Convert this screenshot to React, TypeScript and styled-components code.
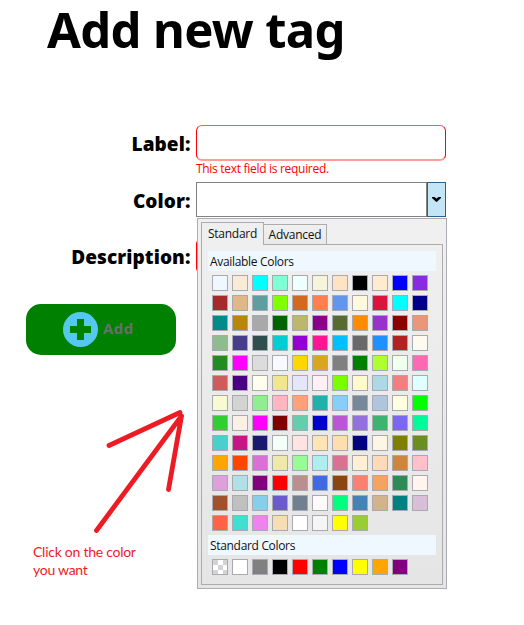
import React from "react";
import styled, { createGlobalStyle } from "styled-components";

const GlobalStyle = createGlobalStyle`
  * { box-sizing: border-box; }
  body { margin: 0; background: #fff; }
`;

const AVAILABLE_COLORS = `aliceblue antiquewhite aqua aquamarine azure beige bisque black blanchedalmond blue blueviolet
brown burlywood cadetblue chartreuse chocolate coral cornflowerblue cornsilk crimson cyan darkblue
darkcyan darkgoldenrod darkgray darkgreen darkkhaki darkmagenta darkolivegreen darkorange darkorchid darkred darksalmon
darkseagreen darkslateblue darkslategray darkturquoise darkviolet deeppink deepskyblue dimgray dodgerblue firebrick floralwhite
forestgreen fuchsia gainsboro ghostwhite gold goldenrod gray green greenyellow honeydew hotpink
indianred indigo ivory khaki lavender lavenderblush lawngreen lemonchiffon lightblue lightcoral lightcyan
lightgoldenrodyellow lightgray lightgreen lightpink lightsalmon lightseagreen lightskyblue lightslategray lightsteelblue lightyellow lime
limegreen linen magenta maroon mediumaquamarine mediumblue mediumorchid mediumpurple mediumseagreen mediumslateblue mediumspringgreen
mediumturquoise mediumvioletred midnightblue mintcream mistyrose moccasin navajowhite navy oldlace olive olivedrab
orange orangered orchid palegoldenrod palegreen paleturquoise palevioletred papayawhip peachpuff peru pink
plum powderblue purple red rosybrown royalblue saddlebrown salmon sandybrown seagreen seashell
sienna silver skyblue slateblue slategray snow springgreen steelblue tan teal thistle
tomato turquoise violet wheat white whitesmoke yellow yellowgreen`.split(/\s+/);

const STANDARD_COLORS = [
  "conic-gradient(#fff 25%, #d3d3d3 0 50%, #fff 0 75%, #d3d3d3 0) 0 0 / 10px 10px",
  "white", "gray", "black", "red", "green", "blue", "yellow", "orange", "purple",
];

const Page = styled.main`
  position: relative;
  width: 524px;
  height: 625px;
  background: #fff;
  color: #000;
  font-family: "Open Sans", "Noto Sans", sans-serif;
`;

const Title = styled.h1`
  margin: 0 0 0 47px;
  height: 125px;
  font: 700 49px/58px "Noto Sans", sans-serif;
  letter-spacing: -0.65px;
  white-space: nowrap;
`;

const Form = styled.form`
  display: grid;
  grid-template-columns: 190.5px 250px;
  grid-template-rows: 57px 56px 66px;
  column-gap: 5.5px;
`;

const FieldLabel = styled.label`
  justify-self: end;
  font: 800 19px/39px "Open Sans", sans-serif;
  letter-spacing: 0.08px;
  white-space: nowrap;
`;

const Field = styled.div``;

const TextInput = styled.input`
  display: block;
  width: 250px;
  height: 36px;
  padding: 0 8px;
  border: 1px solid #f00;
  border-top-color: #ff5a5a;
  border-bottom: 2px solid #ff9c9c;
  border-radius: 6px;
  background: #fff;
  outline: none;
`;

const ErrorText = styled.div`
  color: #f00;
  font: 400 12px/16px "Open Sans", sans-serif;
  letter-spacing: -0.3px;
  white-space: nowrap;
`;

const Combo = styled.div`
  display: flex;
  width: 250px;
  height: 35px;
`;

const ComboValue = styled.div`
  flex: 1;
  border: 1px solid #828282;
  background: #fff;
`;

const ComboButton = styled.button`
  display: flex;
  align-items: center;
  justify-content: center;
  width: 19px;
  padding: 0;
  border: 1px solid #2c628b;
  background: #c4e5f6;
`;

const AddButton = styled.button`
  display: flex;
  align-items: center;
  gap: 5px;
  width: 150px;
  height: 51px;
  margin-left: 26px;
  padding: 0 0 0 37px;
  border: 0;
  border-radius: 15px;
  background: #008000;
  color: #6d6d6d;
  font: 700 15px/20px "Open Sans", sans-serif;
  letter-spacing: 0.4px;
`;

const AddText = styled.span`
  padding-bottom: 4px;
`;

const Arrow = styled.svg`
  display: block;
  margin: 54px 0 0 90px;
`;

const Note = styled.p`
  margin: 8px 0 0 33px;
  width: 130px;
  color: #ed1c24;
  font: 400 14px/18px Lato, sans-serif;
  letter-spacing: -0.26px;
`;

const Popup = styled.section`
  position: absolute;
  left: 197px;
  top: 218px;
  width: 250px;
  height: 371px;
  padding: 3px;
  border: 1px solid #acacb4;
  background: linear-gradient(#f0f0f0, #e5e5e5);
`;

const Tabs = styled.div`
  display: flex;
  align-items: flex-end;
  height: 22px;
`;

const Tab = styled.button<{ $active?: boolean }>`
  position: relative;
  z-index: ${(p) => (p.$active ? 1 : 0)};
  width: ${(p) => (p.$active ? 63 : 64)}px;
  height: ${(p) => (p.$active ? 23 : 20)}px;
  margin: ${(p) => (p.$active ? "0 0 -1px" : "0 0 0 -1px")};
  padding: ${(p) => (p.$active ? "0 0 1px" : "1px 0 0")};
  border: 1px solid #acacac;
  border-bottom: 0;
  background: ${(p) => (p.$active ? "#efefef" : "linear-gradient(#f0f0f0, #e9e9e9)")};
  color: #111;
  font: 400 12px/18px "Open Sans", sans-serif;
  letter-spacing: -0.25px;
`;

const TabPanel = styled.div`
  width: 242px;
  height: 341px;
  padding: 6px;
  border: 1px solid #acacac;
`;

const GroupTitle = styled.h2`
  margin: 0;
  width: 228px;
  height: 20px;
  padding-left: 2px;
  background: #f0f8ff;
  font: 400 12px/22px "Open Sans", sans-serif;
  letter-spacing: -0.32px;
  color: #111;
`;

const Swatches = styled.div`
  display: grid;
  grid-template-columns: repeat(11, 16px);
  grid-auto-rows: 16px;
  gap: 4px;
  padding: 4px;
`;

const Swatch = styled.span<{ $fill: string }>`
  border: 1px solid #a9a9b1;
  background: ${(p) => p.$fill};
  background-origin: padding-box;
  background-clip: padding-box;
`;

export default function App() {
  return (
    <>
      <GlobalStyle />
      <Page>
        <Title>Add new tag</Title>
        <Form>
          <FieldLabel>Label:</FieldLabel>
          <Field>
            <TextInput />
            <ErrorText>This text field is required.</ErrorText>
          </Field>
          <FieldLabel>Color:</FieldLabel>
          <Combo>
            <ComboValue />
            <ComboButton type="button" aria-label="Open colors">
              <svg width="9" height="5" viewBox="0 0 9 5">
                <path d="M0 0H2.5L4.5 1.5 6.5 0H9V1L5 4.7H4L0 1Z" fill="#000" />
              </svg>
            </ComboButton>
          </Combo>
          <FieldLabel>Description:</FieldLabel>
          <Field>
            <TextInput />
          </Field>
        </Form>
        <AddButton type="button">
          <svg width="35" height="35" viewBox="0 0 35 35">
            <circle cx="17.5" cy="17.5" r="17.5" fill="#55c8f2" />
            <path d="M14 7h7v7h7v7h-7v7h-7v-7H7v-7h7Z" fill="#008000" />
          </svg>
          <AddText>Add</AddText>
        </AddButton>
        <Arrow width="100" height="126" viewBox="90 409 100 126" fill="none" stroke="#ed1c24" strokeWidth="4.8" strokeLinecap="round">
          <path d="M96.5 530.5 181.5 416M109 445.5 180 412.5M168.5 489.5 181.5 416" />
        </Arrow>
        <Note>Click on the color<br />you want</Note>
        <Popup>
          <Tabs>
            <Tab type="button" $active>Standard</Tab>
            <Tab type="button">Advanced</Tab>
          </Tabs>
          <TabPanel>
            <GroupTitle>Available Colors</GroupTitle>
            <Swatches>
              {AVAILABLE_COLORS.map((c) => <Swatch key={c} $fill={c} />)}
            </Swatches>
            <GroupTitle>Standard Colors</GroupTitle>
            <Swatches>
              {STANDARD_COLORS.map((c) => <Swatch key={c} $fill={c} />)}
            </Swatches>
          </TabPanel>
        </Popup>
      </Page>
    </>
  );
}
